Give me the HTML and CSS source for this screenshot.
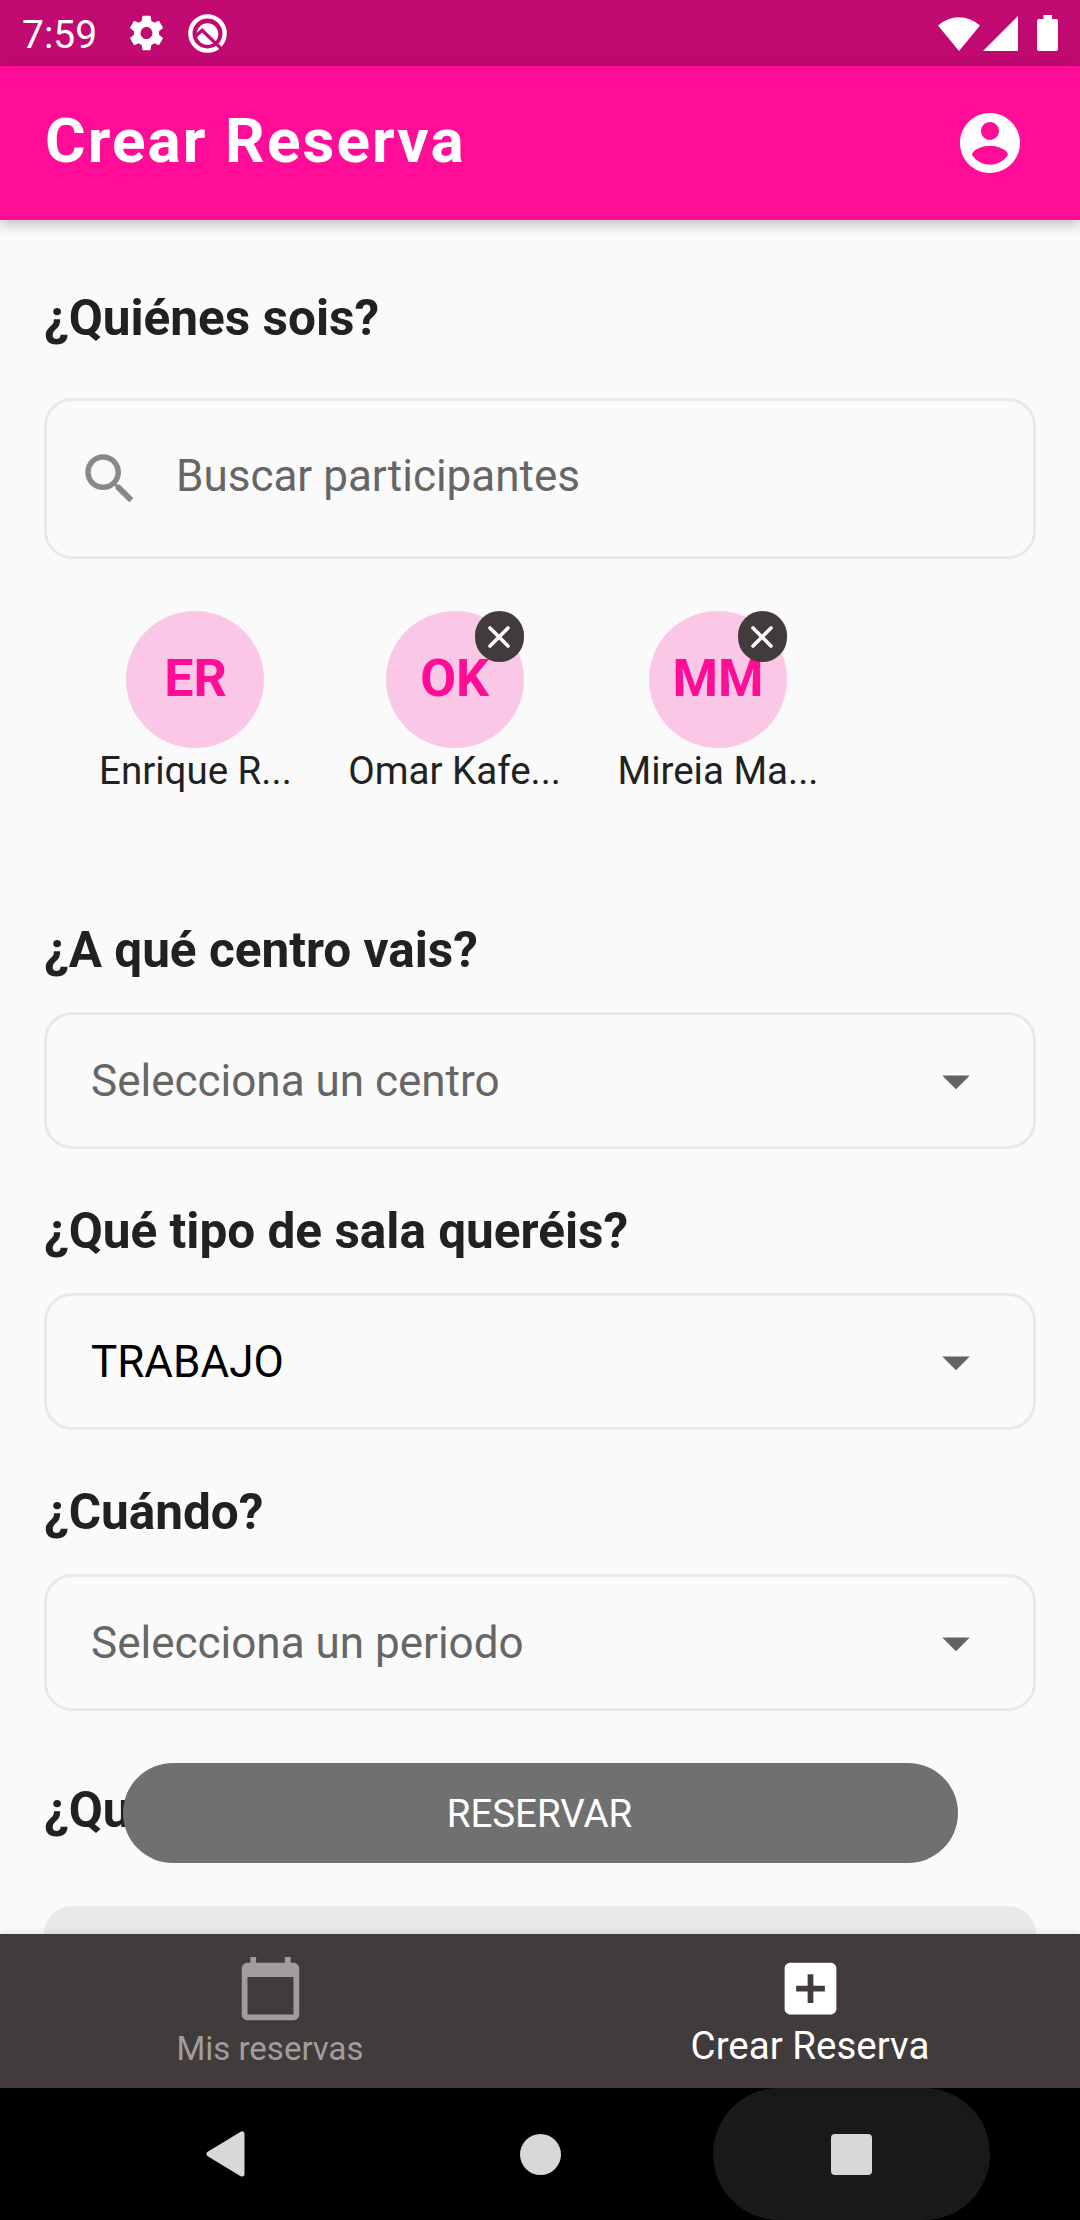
FILE: index.html
```html
<!DOCTYPE html>
<html lang="es">
<head>
<meta charset="utf-8">
<title>Crear Reserva</title>
<link rel="stylesheet" href="styles.css">
</head>
<body>
<div class="screen">
  <div class="status-bar">
    <span class="clock">7:59</span>
    <svg class="gear" viewBox="2 2 20 20" preserveAspectRatio="none"><path d="M19.14 12.94c.04-.3.06-.61.06-.94s-.02-.64-.07-.94l2.03-1.58c.18-.14.23-.41.12-.61l-1.92-3.32c-.12-.22-.37-.29-.59-.22l-2.39.96c-.5-.38-1.03-.7-1.62-.94l-.36-2.54c-.04-.24-.24-.41-.48-.41h-3.84c-.24 0-.43.17-.47.41l-.36 2.54c-.59.24-1.13.57-1.62.94l-2.39-.96c-.22-.08-.47 0-.59.22L2.74 8.87c-.12.21-.08.47.12.61l2.03 1.58c-.05.3-.09.63-.09.94s.02.64.07.94l-2.03 1.58c-.18.14-.23.41-.12.61l1.92 3.32c.12.22.37.29.59.22l2.39-.96c.5.38 1.03.7 1.62.94l.36 2.54c.05.24.24.41.48.41h3.84c.24 0 .44-.17.47-.41l.36-2.54c.59-.24 1.13-.56 1.62-.94l2.39.96c.22.08.47 0 .59-.22l1.92-3.32c.12-.22.07-.47-.12-.61l-2.01-1.58zM12 15.4c-1.9 0-3.4-1.5-3.4-3.4s1.5-3.4 3.4-3.4 3.4 1.5 3.4 3.4-1.5 3.4-3.4 3.4z"/></svg>
    <svg class="q-icon" viewBox="0 0 38 38"><circle class="ring" cx="19" cy="19" r="16.7"/><circle cx="19" cy="19.500" r="10.500"/><path class="cut" d="M7 22L13.800 15.800L32.500 34"/></svg>
    <span class="spacer"></span>
    <svg class="wifi" viewBox="0 0 42 35"><path d="M0 9.500A31 31 0 0 1 42 9.500L21 35Z"/></svg>
    <svg class="signal" viewBox="0 0 35 35"><path d="M35 0V35H0Z"/></svg>
    <svg class="battery" viewBox="0 0 21 36"><path d="M6.500 0H15V4H19Q21 4 21 6V34Q21 36 19 36H2Q0 36 0 34V6Q0 4 2 4H6.500Z"/></svg>
  </div>
  <header class="app-bar">
    <h1 class="title">Crear Reserva</h1>
    <svg class="account" viewBox="0 0 24 24"><path d="M12 2C6.480 2 2 6.480 2 12s4.480 10 10 10 10-4.480 10-10S17.520 2 12 2zm0 3c1.660 0 3 1.340 3 3s-1.340 3-3 3-3-1.340-3-3 1.340-3 3-3zm0 14.200c-2.500 0-4.710-1.280-6-3.220.03-1.990 4-3.080 6-3.080 1.990 0 5.970 1.090 6 3.080-1.290 1.940-3.500 3.220-6 3.220z"/></svg>
  </header>
  <main class="content">
    <h2 class="question">¿Quiénes sois?</h2>
    <div class="field search">
      <svg class="search-icon" viewBox="0 0 24 24"><path d="M15.500 14h-.79l-.28-.27C15.410 12.590 16 11.110 16 9.500 16 5.910 13.090 3 9.500 3S3 5.910 3 9.500 5.910 16 9.500 16c1.610 0 3.090-.59 4.230-1.570l.27.28v.79l5 4.990L20.490 19l-4.990-5zm-6 0C7.010 14 5 11.990 5 9.500S7.010 5 9.500 5 14 7.010 14 9.500 11.990 14 9.500 14z"/></svg>
      <span class="hint">Buscar participantes</span>
    </div>
    <div class="people">
      <div class="person">
        <div class="avatar">ER</div>
        <span class="name">Enrique R...</span>
      </div>
      <div class="person">
        <div class="avatar">OK
          <span class="remove"><svg viewBox="0 0 22 22"><path d="M2 2L20 20M20 2L2 20"/></svg></span>
        </div>
        <span class="name">Omar Kafe...</span>
      </div>
      <div class="person">
        <div class="avatar">MM
          <span class="remove"><svg viewBox="0 0 22 22"><path d="M2 2L20 20M20 2L2 20"/></svg></span>
        </div>
        <span class="name">Mireia Ma...</span>
      </div>
    </div>
    <h2 class="question">¿A qué centro vais?</h2>
    <div class="field select"><span class="hint">Selecciona un centro</span><svg class="arrow" viewBox="0 0 24 24"><path d="M7 10l5 5 5-5z"/></svg></div>
    <h2 class="question">¿Qué tipo de sala queréis?</h2>
    <div class="field select"><span class="value">TRABAJO</span><svg class="arrow" viewBox="0 0 24 24"><path d="M7 10l5 5 5-5z"/></svg></div>
    <h2 class="question">¿Cuándo?</h2>
    <div class="field select"><span class="hint">Selecciona un periodo</span><svg class="arrow" viewBox="0 0 24 24"><path d="M7 10l5 5 5-5z"/></svg></div>
    <h2 class="question last">¿Qu</h2>
    <div class="panel"></div>
    <button class="reserve">RESERVAR</button>
  </main>
  <nav class="tabs">
    <div class="tab">
      <svg viewBox="0 0 24 24"><path d="M20 3h-1V1h-2v2H7V1H5v2H4c-1.100 0-2 .9-2 2v16c0 1.100.9 2 2 2h16c1.100 0 2-.9 2-2V5c0-1.100-.9-2-2-2zm0 18H4V8h16v13z"/></svg>
      <span>Mis reservas</span>
    </div>
    <div class="tab active">
      <svg viewBox="0 0 24 24"><path d="M19 3H5c-1.110 0-2 .9-2 2v14c0 1.100.89 2 2 2h14c1.100 0 2-.9 2-2V5c0-1.100-.9-2-2-2zm-2 10h-4v4h-2v-4H7v-2h4V7h2v4h4v2z"/></svg>
      <span>Crear Reserva</span>
    </div>
  </nav>
  <div class="system-nav">
    <div class="key"><svg class="back" viewBox="0 0 39 46"><path d="M3 23L36 3V43Z" stroke-width="5" stroke-linejoin="round"/></svg></div>
    <div class="key"><span class="home"></span></div>
    <div class="key pressed"><span class="recents"></span></div>
  </div>
</div>
</body>
</html>
```
FILE: styles.css
```css
* { box-sizing: border-box; }
body { margin: 0; font-family: Roboto, sans-serif; background: #fafafa; }
svg { display: block; flex: none; }
.screen { width: 1080px; height: 2220px; display: flex; flex-direction: column; overflow: hidden; }

.status-bar { height: 66px; flex: none; background: #c00a72; display: flex; align-items: center; padding: 0 22px; color: #fff; }
.status-bar svg { fill: #fff; }
.clock { font-size: 39px; line-height: 46px; width: 76px; padding-top: 3px; }
.gear { width: 35px; height: 36px; margin-left: 31px; }
.q-icon { width: 39px; height: 39px; margin-left: 24px; }
.status-bar .ring { fill: none; stroke: #fff; stroke-width: 4.2; }
.status-bar .cut { fill: none; stroke: #c00a72; stroke-width: 3.2; }
.spacer { flex: 1; }
.wifi { width: 42px; height: 35px; margin-right: 3px; }
.signal { width: 35px; height: 35px; margin-right: 19px; }
.battery { width: 21px; height: 36px; }

.app-bar { height: 154px; flex: none; background: #ff0d96; display: flex; align-items: center; justify-content: space-between; padding: 0 54px 0 45px; box-shadow: 0 4px 12px rgba(0, 0, 0, .25); position: relative; z-index: 1; }
.title { margin: 0; padding-bottom: 5px; font-size: 62px; line-height: 74px; font-weight: 700; letter-spacing: 2.1px; color: #fff; }
.account { width: 72px; height: 72px; fill: #fff; }

.content { position: relative; flex: 1; min-height: 0; overflow: hidden; padding: 69px 44px 0; }
.question { margin: 53px 0 33px; font-size: 49.5px; line-height: 58px; font-weight: 700; color: #212121; }
.question:first-child { margin: 0 0 51px; }
.question.last { margin: 70px 0 67px; }
.field { display: flex; align-items: center; border: 3px solid #e9e9e9; border-radius: 28px; font-size: 44px; line-height: 52px; }
.hint { color: #666; }
.value { color: #000; }
.search { height: 161px; padding-left: 30px; }
.search-icon { width: 66px; height: 66px; fill: #888; margin-right: 33px; }
.search .hint { padding-bottom: 5px; }
.select { height: 137px; justify-content: space-between; padding: 0 44px; }
.arrow { width: 66px; height: 66px; fill: #636363; }

.people { display: flex; gap: 56.5px; margin: 52px 0 127px; padding-left: 55px; }
.person { display: flex; flex-direction: column; align-items: center; }
.avatar { position: relative; width: 138px; height: 137px; border-radius: 50%; background: #fac8e6; color: #ff0d96; font-size: 52px; font-weight: 700; line-height: 135px; text-align: center; }
.name { font-size: 38.5px; line-height: 46px; color: #212121; white-space: nowrap; }
.remove { position: absolute; top: 0; right: 0; width: 49px; height: 51px; border-radius: 25px; background: #423b3b; display: flex; align-items: center; justify-content: center; }
.remove svg { width: 22px; height: 22px; stroke: #fff; stroke-width: 3.6; stroke-linecap: round; }

.panel { height: 137px; border-radius: 28px; background: #e9e9e9; }
.reserve { position: absolute; left: 123px; right: 122px; bottom: 71px; height: 100px; border: 0; border-radius: 50px; background: #707070; color: #fff; font: 400 38.5px/46px Roboto, sans-serif; padding: 2px 2px 0 0; }

.tabs { height: 154px; flex: none; display: flex; background: #423b3b; box-shadow: 0 0 8px rgba(0, 0, 0, .14); position: relative; }
.tab { flex: 1; display: flex; flex-direction: column; align-items: center; padding-top: 20px; color: #a09d9d; font-size: 33px; line-height: 39px; gap: 6px; }
.tab svg { width: 69px; height: 69px; fill: currentColor; }
.tab.active { color: #fff; font-size: 38.5px; line-height: 45px; gap: 0; }

.system-nav { height: 132px; flex: none; background: #000; display: flex; justify-content: center; gap: 34px; }
.key { width: 277px; height: 132px; border-radius: 66px; display: flex; align-items: center; justify-content: center; }
.key.pressed { background: #191919; }
.back { width: 39px; height: 46px; margin-right: 8px; fill: #d8d8d8; stroke: #d8d8d8; }
.home { width: 41px; height: 41px; border-radius: 50%; background: #d8d8d8; }
.recents { width: 41px; height: 41px; border-radius: 4px; background: #d8d8d8; }
```
